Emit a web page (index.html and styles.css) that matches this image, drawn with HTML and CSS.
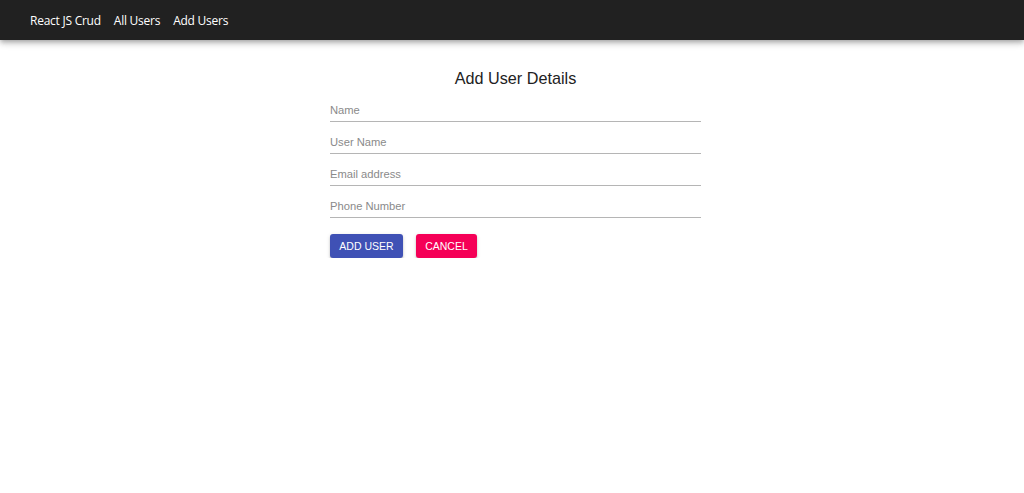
FILE: index.html
```html
<!DOCTYPE html>
<html>
<head>
<meta charset="utf-8">
<link rel="stylesheet" href="styles.css">
</head>
<body>
<header class="navbar">
  <a class="nav-link">React JS Crud</a>
  <a class="nav-link">All Users</a>
  <a class="nav-link">Add Users</a>
</header>
<main class="page">
  <form class="form">
    <h2 class="title">Add User Details</h2>
    <div class="field"><input class="input" placeholder="Name"></div>
    <div class="field"><input class="input" placeholder="User Name"></div>
    <div class="field"><input class="input" placeholder="Email address"></div>
    <div class="field"><input class="input" placeholder="Phone Number"></div>
    <div class="actions">
      <button type="button" class="btn btn-primary">ADD USER</button>
      <button type="button" class="btn btn-secondary">CANCEL</button>
    </div>
  </form>
</main>
</body>
</html>
```
FILE: styles.css
```css
* { box-sizing: border-box; }
html, body { margin: 0; padding: 0; background: #fff; }
body { font-family: "Liberation Sans", Arial, sans-serif; }
.navbar {
  height: 40px;
  background: #212121;
  display: flex;
  align-items: center;
  gap: 13px;
  padding-left: 30px;
  box-shadow: 0 2px 4px -1px rgba(0,0,0,0.2), 0 4px 5px 0 rgba(0,0,0,0.14), 0 1px 10px 0 rgba(0,0,0,0.12);
}
.nav-link {
  color: #fff;
  font-family: "Open Sans", "Noto Sans", sans-serif;
  font-size: 12px;
  letter-spacing: -0.25px;
}
.page { display: flex; justify-content: center; padding-left: 7px; }
.form { width: 371px; margin-top: 27px; display: flex; flex-direction: column; }
.title {
  margin: 0 0 1px 0;
  text-align: center;
  font-weight: 400;
  font-size: 16.2px;
  color: #222;
  line-height: 22px;
  font-family: "Liberation Sans", Arial, sans-serif;
}
.field { height: 32px; display: flex; align-items: flex-end; }
.input {
  width: 100%;
  border: 0;
  border-bottom: 1px solid #b5b5b5;
  padding: 0 0 3px 0;
  font-family: "Liberation Sans", Arial, sans-serif;
  font-size: 11.2px;
  outline: none;
  height: 20px;
  background: transparent;
}
.input::placeholder { color: #8a8a8a; }
.actions { display: flex; gap: 13px; margin-top: 16px; }
.btn {
  height: 24px;
  border: 0;
  border-radius: 3px;
  color: #fff;
  font-family: "Liberation Sans", Arial, sans-serif;
  font-size: 10.5px;
  font-weight: 400;
  padding: 0;
  box-shadow: 0 2px 2px rgba(0,0,0,0.18), 0 1px 4px rgba(0,0,0,0.12);
}
.btn-primary { background: #3f51b5; width: 73px; }
.btn-secondary { background: #f50057; width: 61px; }
```
